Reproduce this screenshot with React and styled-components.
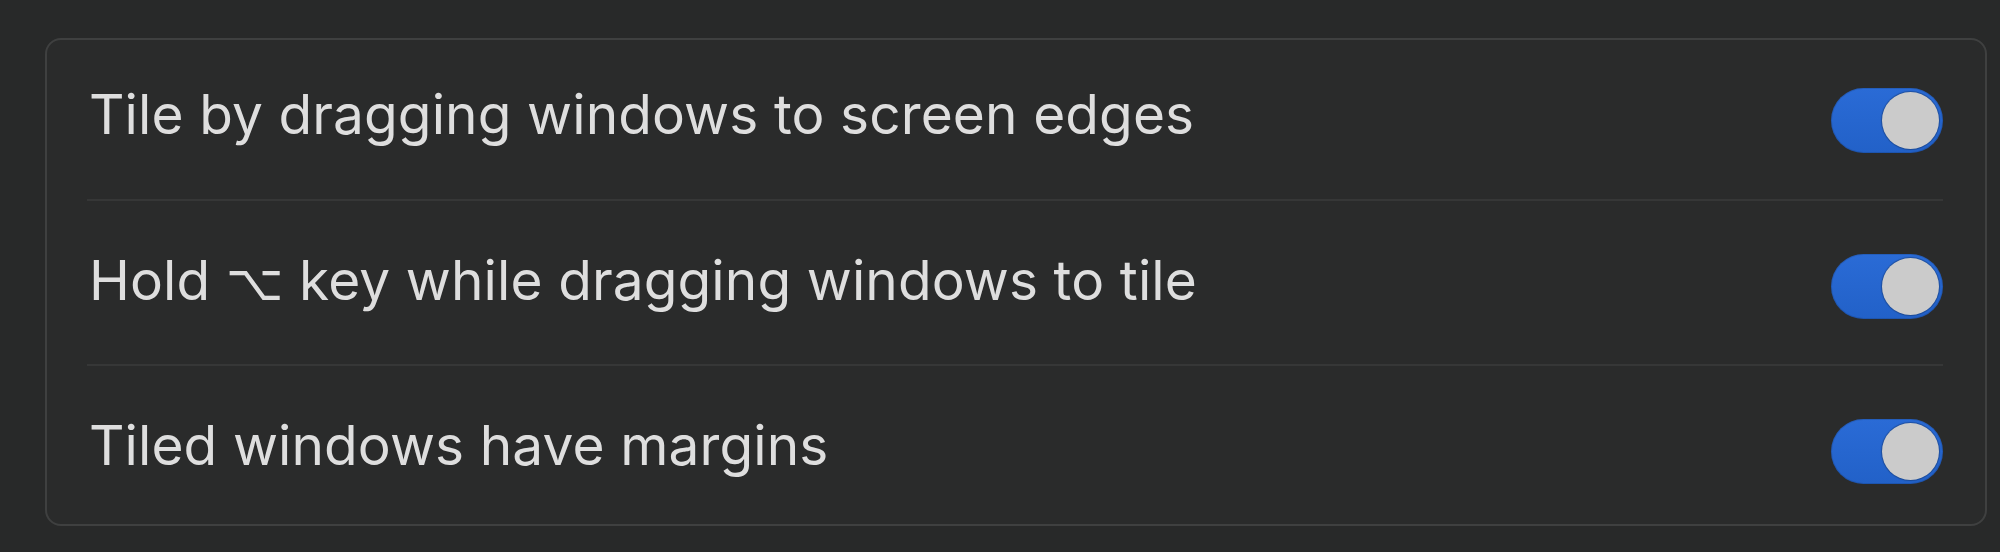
import React, { useState } from 'react'
import styled, { createGlobalStyle } from 'styled-components'

const Global = createGlobalStyle`
    html, body {
        margin: 0;
        padding: 0;
        background: #282929;
    }
    body {
        font-family: Inter, "Noto Sans", "DejaVu Sans", sans-serif;
        -webkit-font-smoothing: antialiased;
    }
`

// - - - - - - PAGE - - - - - - //

const Page = styled.div`
    width: 2000px;
    height: 552px;
    box-sizing: border-box;
    padding: 38px 13px 0 45px;
    background: #282929;
`

// - - - - - - SETTINGS CARD - - - - - - //

const Card = styled.div`
    box-sizing: border-box;
    width: 1942px;
    height: 488px;
    background: #2a2b2b;
    border: 2px solid #3f4040;
    border-radius: 16px;
    padding: 0 42px 0 40px;
    display: flex;
    flex-direction: column;
`

// first row sits a little higher than the others
const Row = styled.div`
    box-sizing: border-box;
    height: ${p => p.h}px;
    padding-top: ${p => (p.first ? 48 : 53)}px;
    display: flex;
    align-items: flex-start;
    justify-content: space-between;
    border-top: ${p => (p.first ? 'none' : '2px solid #363737')};
`

const Label = styled.span`
    color: #dedede;
    font-size: 55px;
    line-height: 65px;
    font-weight: 400;
    letter-spacing: 0.1px;
    padding-left: 2px;
    margin-top: -6px;
    white-space: nowrap;
`

const OptKey = styled.span`
    font-family: "DejaVu Sans", sans-serif;
    font-size: 50px;
`

// - - - - - - TOGGLE - - - - - - //

const Track = styled.button`
    position: relative;
    width: 112px;
    height: 65px;
    border: none;
    padding: 0;
    border-radius: 33px;
    cursor: pointer;
    background: ${p => (p.on ? 'linear-gradient(#2a6bd6, #2261c8)' : '#4a4b4b')};
    box-shadow: inset 0 0 0 1px rgba(0, 0, 0, 0.12);
    flex-shrink: 0;
`

const Knob = styled.span`
    position: absolute;
    top: 4px;
    left: ${p => (p.on ? '51px' : '4px')};
    width: 57px;
    height: 57px;
    border-radius: 50%;
    background: #cbcbcb;
    box-shadow: 0 0 1px 1px rgba(0, 0, 0, 0.25);
    transition: left 0.2s ease;
`

const Toggle = ({ on, onClick }) => (
    <Track on={on ? 1 : 0} onClick={onClick}>
        <Knob on={on ? 1 : 0} />
    </Track>
)

export default function App() {
    const [opts, setOpts] = useState([true, true, true])

    const flip = i => setOpts(prev => prev.map((v, j) => (j === i ? !v : v)))

    return (
        <Page>
            <Global />
            <Card>
                <Row first h={159}>
                    <Label>Tile by dragging windows to screen edges</Label>
                    <Toggle on={opts[0]} onClick={() => flip(0)} />
                </Row>
                <Row h={165}>
                    <Label>Hold <OptKey>⌥</OptKey> key while dragging windows to tile</Label>
                    <Toggle on={opts[1]} onClick={() => flip(1)} />
                </Row>
                <Row h={160}>
                    <Label>Tiled windows have margins</Label>
                    <Toggle on={opts[2]} onClick={() => flip(2)} />
                </Row>
            </Card>
        </Page>
    )
}
